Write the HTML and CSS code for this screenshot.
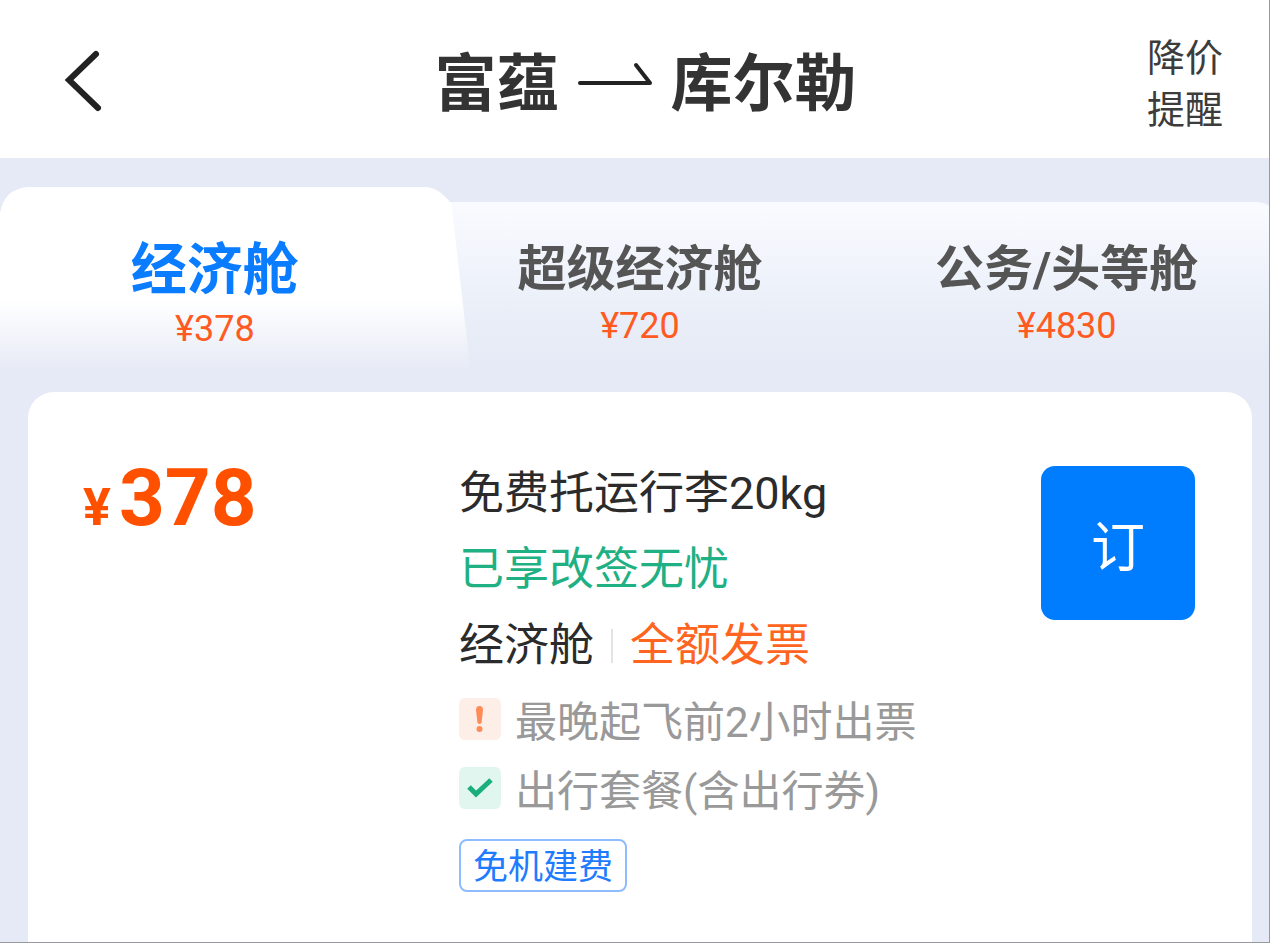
FILE: index.html
```html
<!DOCTYPE html>
<html lang="zh-CN">
<head>
    <meta charset="UTF-8">
    <title>富蕴 - 库尔勒</title>
    <link rel="stylesheet" href="styles.css">
</head>
<body>
    <header class="top">
        <button class="back" type="button" aria-label="返回">
            <svg width="44" height="64" viewBox="0 0 44 64">
                <path d="M36 5L9 31L38 59" fill="none" stroke="#222" stroke-width="6" stroke-linecap="round"/>
            </svg>
        </button>
        <h1 class="route">
            <span>富蕴</span>
            <svg width="76" height="40" viewBox="0 0 76 40">
                <path d="M3 22H73L59 4" fill="none" stroke="#222" stroke-width="4" stroke-linecap="round" stroke-linejoin="round"/>
            </svg>
            <span>库尔勒</span>
        </h1>
        <button class="remind" type="button">降价<br>提醒</button>
    </header>

    <main>
        <div class="tabs" role="tablist">
            <button class="tab active" type="button" role="tab" aria-selected="true">
                <svg class="shape" viewBox="0 0 470 190" preserveAspectRatio="none">
                    <defs>
                        <linearGradient id="fade" x1="0" y1="0" x2="0" y2="1">
                            <stop offset="0.6" stop-color="#fff"/>
                            <stop offset="0.97" stop-color="#e6eaf6"/>
                        </linearGradient>
                    </defs>
                    <path d="M0 26Q4 2 28 0H424C438 0 443 7 452 16L472 190H0Z" fill="url(#fade)"/>
                </svg>
                <span class="name">经济舱</span>
                <span class="fare">¥378</span>
            </button>
            <button class="tab" type="button" role="tab" aria-selected="false">
                <span class="name">超级经济舱</span>
                <span class="fare">¥720</span>
            </button>
            <button class="tab" type="button" role="tab" aria-selected="false">
                <span class="name">公务/头等舱</span>
                <span class="fare">¥4830</span>
            </button>
        </div>

        <section class="card">
            <div class="price"><small>¥</small>378</div>
            <div class="details">
                <p>免费托运行李20kg</p>
                <p class="green">已享改签无忧</p>
                <p class="cabin">经济舱<i></i><span class="orange">全额发票</span></p>
                <ul class="notes">
                    <li>
                        <svg width="42" height="42" viewBox="0 0 42 42">
                            <rect width="42" height="42" rx="6" fill="#fdeee8"/>
                            <path d="M17 12Q17 8 20.500 8T24 12L22.500 25Q20.500 27 18.500 25Z" fill="#ff8b57"/>
                            <circle cx="20.500" cy="31" r="3" fill="#ff8b57"/>
                        </svg>
                        <span>最晚起飞前2小时出票</span>
                    </li>
                    <li>
                        <svg width="42" height="42" viewBox="0 0 42 42">
                            <rect width="42" height="42" rx="6" fill="#e1f6ef"/>
                            <path d="M10 20L17 27L32 13" fill="none" stroke="#19ae7c" stroke-width="5"/>
                        </svg>
                        <span>出行套餐(含出行券)</span>
                    </li>
                </ul>
                <span class="tag">免机建费</span>
            </div>
            <button class="book" type="button">订</button>
        </section>
    </main>
</body>
</html>
```
FILE: styles.css
```css
* {box-sizing:border-box;}
body {
    margin:0;
    min-height:100vh;
    display:flex;
    flex-direction:column;
    border-right:1px solid #96999e;
    border-bottom:1px solid #96999e;
    background:#e6eaf6;
    color:#2b2b2b;
    font-family:Roboto, "Noto Sans CJK SC", sans-serif;
}
button {
    border:0;
    padding:0;
    background:none;
    color:inherit;
    font-family:inherit;
    cursor:pointer;
}
p, ul, h1 {margin:0; padding:0;}
svg {display:block; flex:none;}

.top {
    height:158px;
    display:grid;
    grid-template-columns:150px 1fr 142px;
    align-items:center;
    background:#fff;
    padding:4px 46px 0 60px;
}
.remind {
    justify-self:end;
    padding-top:6px;
    font-size:38px;
    line-height:52px;
    color:#3c3c3c;
}
.route {
    display:flex;
    justify-content:center;
    align-items:center;
    gap:18px;
    font-size:62px;
    line-height:80px;
    color:#333;
}
.route span {padding-top:8px;}

main {
    flex:1;
    display:flex;
    flex-direction:column;
    overflow:hidden;
}
/* the tab strip runs a little past the right edge */
.tabs {
    height:190px;
    margin:44px -11px 0 0;
    display:grid;
    grid-template-columns:1fr 1fr 1fr;
    border-radius:0 24px 0 0;
    background:linear-gradient(#fafbff, #e9eef8 60%, #e6eaf6 85%);
}
.tab {
    position:relative;
    display:flex;
    flex-direction:column;
    align-items:center;
    padding-top:36px;
}
.name {
    font-size:49px;
    line-height:64px;
    font-weight:bold;
    color:#555;
}
.fare {
    font-size:36px;
    line-height:48px;
    color:#ff5a1f;
}
.active {
    margin-top:-15px;
    padding:48px 0 0 3px;
    background:#e6eaf6;
    background:linear-gradient(#e6eaf6 40px, transparent 40px);
}
.active .name {
    font-size:56px;
    line-height:70px;
    color:#0a7cff;
}
.active span {position:relative;}
.shape {
    position:absolute;
    top:0;
    left:0;
    width:110%;
    height:190px;
}

.card {
    flex:1;
    display:grid;
    grid-template-columns:376px 1fr 154px;
    align-items:start;
    margin:0 17px 0 28px;
    padding:64px 57px 50px 55px;
    border-radius:26px 26px 0 0;
    background:#fff;
}
.price {
    display:flex;
    align-items:baseline;
    gap:8px;
    padding-top:2px;
    font-size:80px;
    line-height:80px;
    font-weight:bold;
    color:#ff5000;
}
.price small {font-size:52px;}
.details {
    font-size:45px;
    line-height:76px;
    white-space:nowrap;
}
.green {color:#1fb083;}
.orange {color:#ff6420;}
.cabin {display:flex; align-items:center;}
.cabin i {
    width:2px;
    height:34px;
    margin:0 17px;
    background:#e4e4e4;
}
.notes {
    list-style:none;
    font-size:42px;
    color:#999;
}
.notes li {
    height:69px;
    display:flex;
    align-items:center;
    gap:14px;
}
.notes span {padding-top:8px;}
.tag {
    display:block;
    width:max-content;
    margin-top:17px;
    padding:4px 12px 0;
    border:2px solid #8fbcff;
    border-radius:8px;
    font-size:35px;
    line-height:45px;
    color:#1f7cff;
}
.book {
    height:154px;
    margin-top:10px;
    border-radius:14px;
    background:#007dff;
    font-size:54px;
    color:#fff;
}
```
